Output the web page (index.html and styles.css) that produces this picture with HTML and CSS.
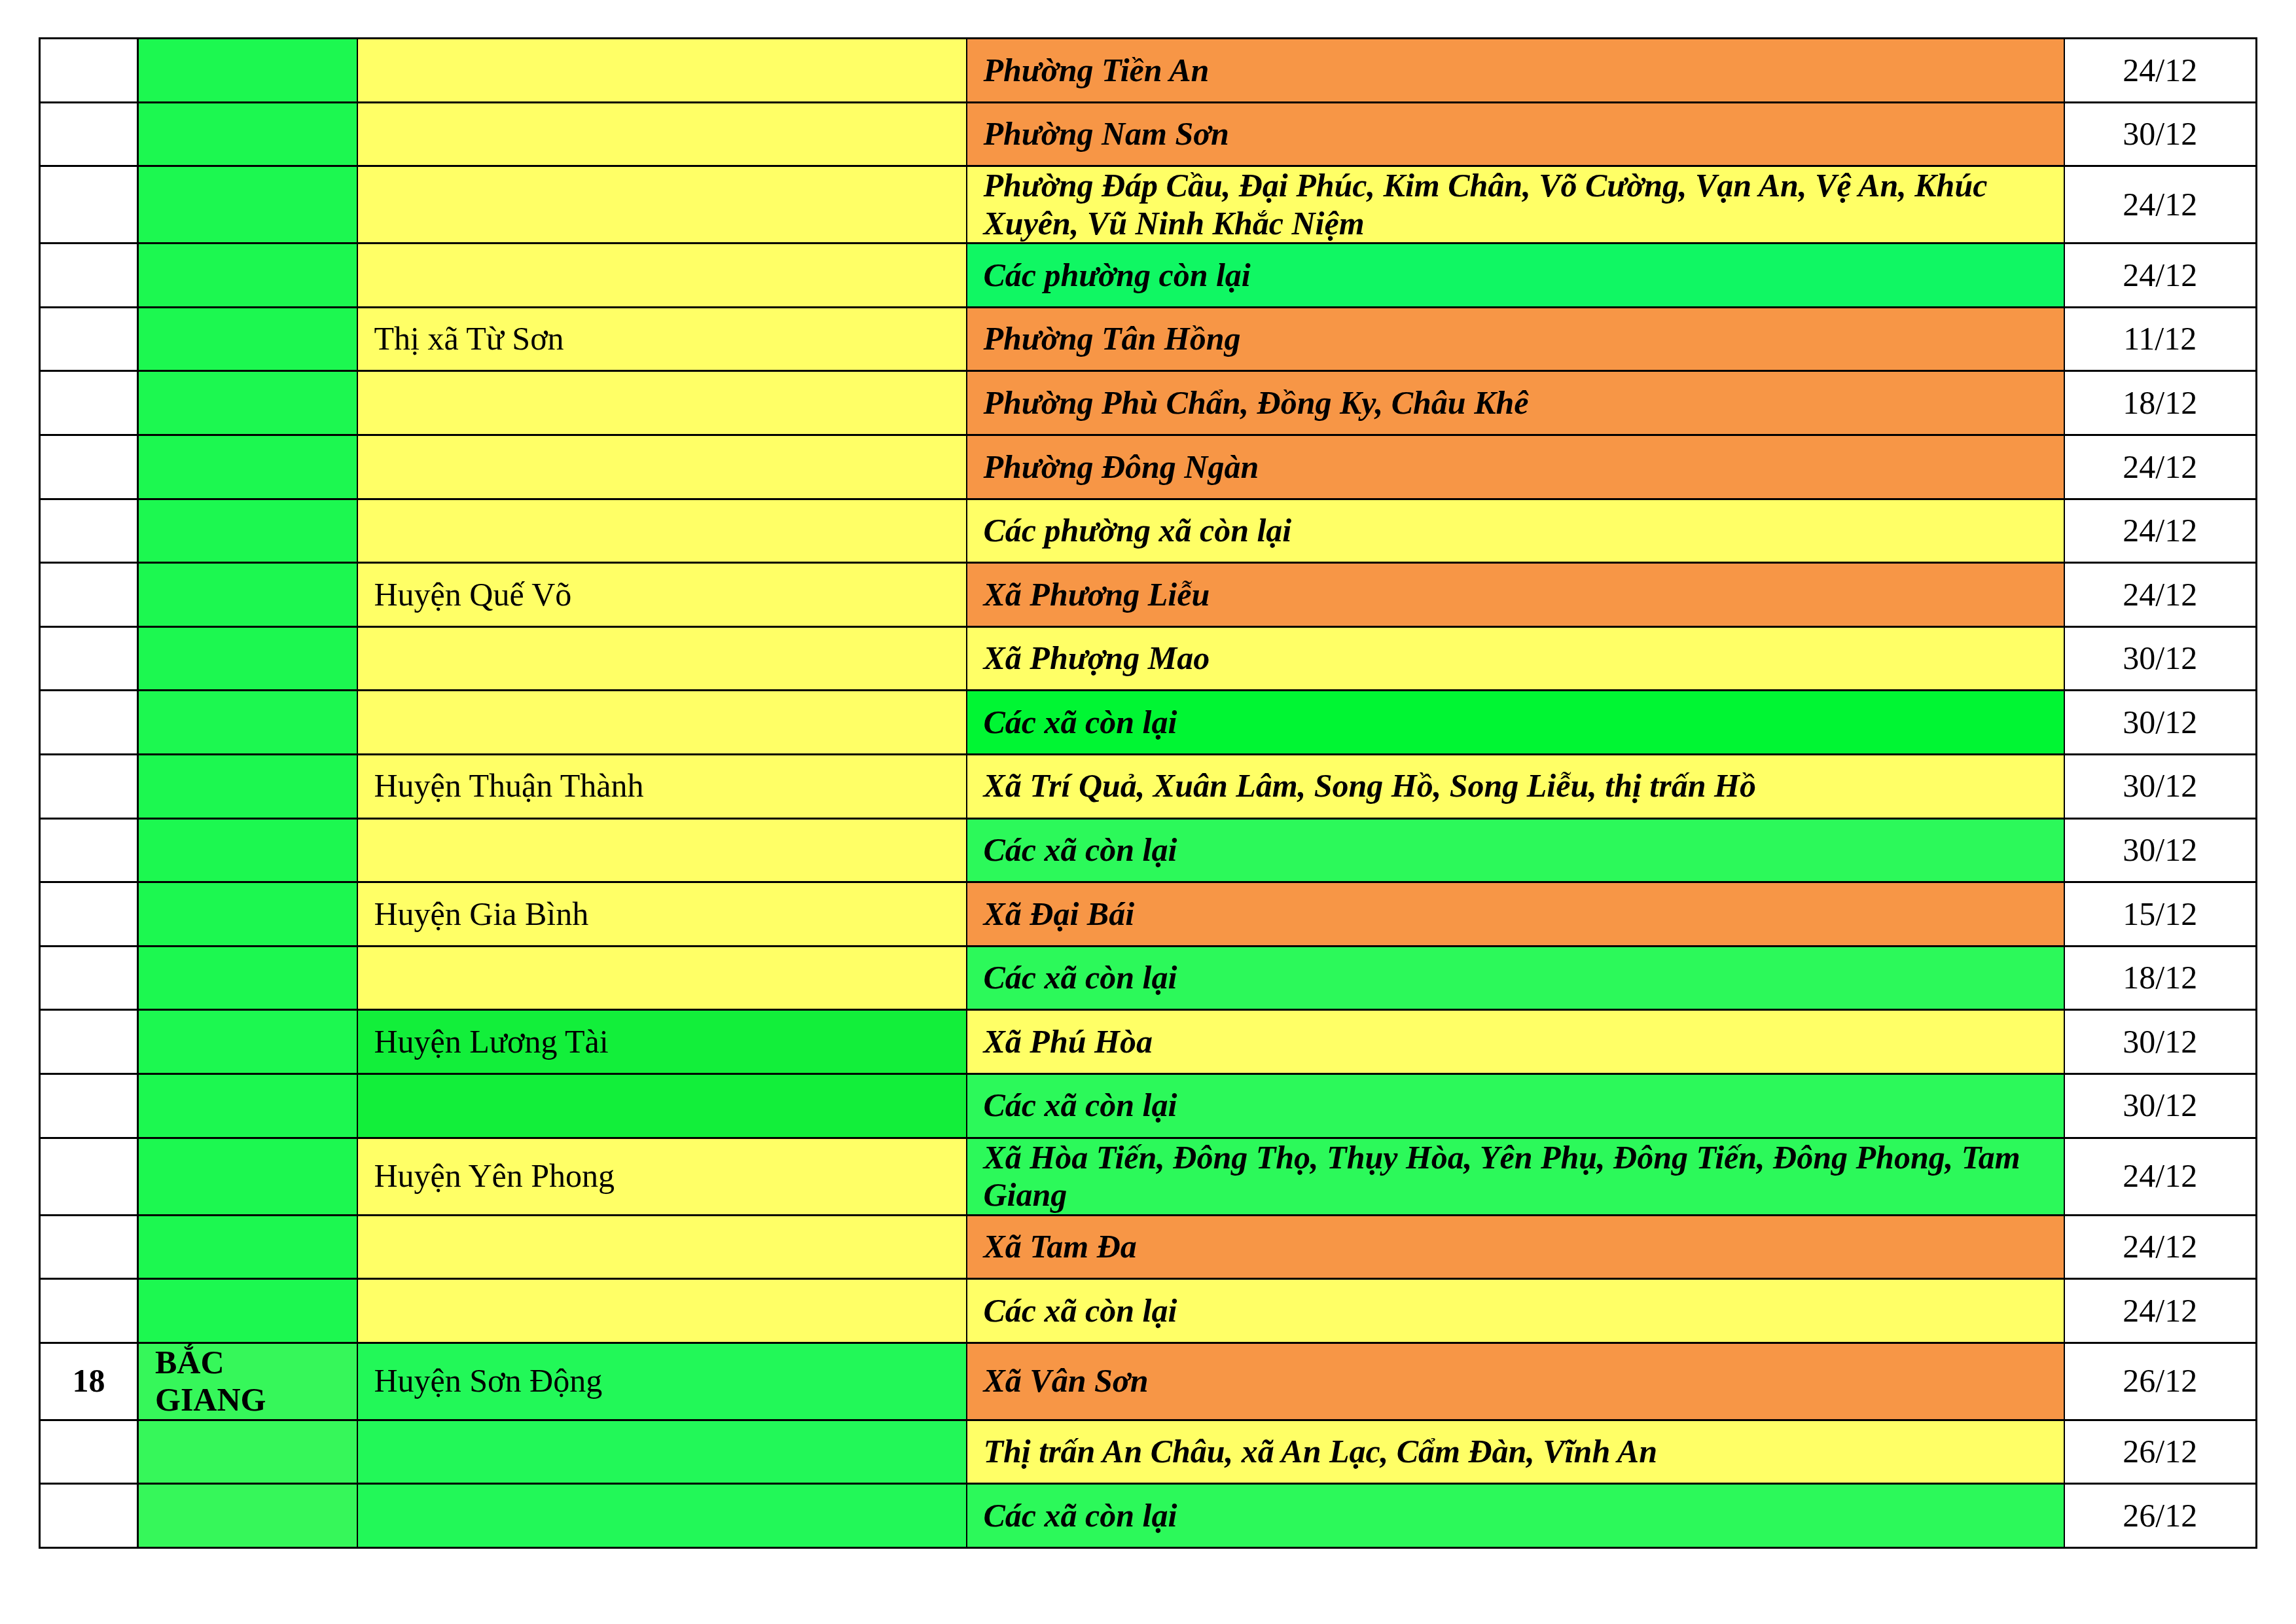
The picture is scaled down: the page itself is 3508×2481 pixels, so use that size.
FILE: index.html
```html
<!DOCTYPE html>
<html lang="vi">
<head>
<meta charset="utf-8">
<title>Bảng</title>
<link rel="stylesheet" href="styles.css">
</head>
<body>
<table class="sheet">
  <colgroup>
    <col class="c-stt"><col class="c-tinh"><col class="c-huyen"><col class="c-xa"><col class="c-ngay">
  </colgroup>
  <tbody>
    <tr><td class="stt"></td><td class="tinh g1"></td><td class="huyen y"></td><td class="xa o">Phường Tiền An</td><td class="ngay">24/12</td></tr>
    <tr><td class="stt"></td><td class="tinh g1"></td><td class="huyen y"></td><td class="xa o">Phường Nam Sơn</td><td class="ngay">30/12</td></tr>
    <tr><td class="stt"></td><td class="tinh g1"></td><td class="huyen y"></td><td class="xa y">Phường Đáp Cầu, Đại Phúc, Kim Chân, Võ Cường, Vạn An, Vệ An, Khúc Xuyên, Vũ Ninh Khắc Niệm</td><td class="ngay">24/12</td></tr>
    <tr><td class="stt"></td><td class="tinh g1"></td><td class="huyen y"></td><td class="xa ga">Các phường còn lại</td><td class="ngay">24/12</td></tr>
    <tr><td class="stt"></td><td class="tinh g1"></td><td class="huyen y">Thị xã Từ Sơn</td><td class="xa o">Phường Tân Hồng</td><td class="ngay">11/12</td></tr>
    <tr><td class="stt"></td><td class="tinh g1"></td><td class="huyen y"></td><td class="xa o">Phường Phù Chẩn, Đồng Ky, Châu Khê</td><td class="ngay">18/12</td></tr>
    <tr><td class="stt"></td><td class="tinh g1"></td><td class="huyen y"></td><td class="xa o">Phường Đông Ngàn</td><td class="ngay">24/12</td></tr>
    <tr><td class="stt"></td><td class="tinh g1"></td><td class="huyen y"></td><td class="xa y">Các phường xã còn lại</td><td class="ngay">24/12</td></tr>
    <tr><td class="stt"></td><td class="tinh g1"></td><td class="huyen y">Huyện Quế Võ</td><td class="xa o">Xã Phương Liễu</td><td class="ngay">24/12</td></tr>
    <tr><td class="stt"></td><td class="tinh g1"></td><td class="huyen y"></td><td class="xa y">Xã Phượng Mao</td><td class="ngay">30/12</td></tr>
    <tr><td class="stt"></td><td class="tinh g1"></td><td class="huyen y"></td><td class="xa gb">Các xã còn lại</td><td class="ngay">30/12</td></tr>
    <tr><td class="stt"></td><td class="tinh g1"></td><td class="huyen y">Huyện Thuận Thành</td><td class="xa y">Xã Trí Quả, Xuân Lâm, Song Hồ, Song Liễu, thị trấn Hồ</td><td class="ngay">30/12</td></tr>
    <tr><td class="stt"></td><td class="tinh g1"></td><td class="huyen y"></td><td class="xa gc">Các xã còn lại</td><td class="ngay">30/12</td></tr>
    <tr><td class="stt"></td><td class="tinh g1"></td><td class="huyen y">Huyện Gia Bình</td><td class="xa o">Xã Đại Bái</td><td class="ngay">15/12</td></tr>
    <tr><td class="stt"></td><td class="tinh g1"></td><td class="huyen y"></td><td class="xa gc">Các xã còn lại</td><td class="ngay">18/12</td></tr>
    <tr><td class="stt"></td><td class="tinh g1"></td><td class="huyen gd">Huyện Lương Tài</td><td class="xa y">Xã Phú Hòa</td><td class="ngay">30/12</td></tr>
    <tr><td class="stt"></td><td class="tinh g1"></td><td class="huyen gd"></td><td class="xa gc">Các xã còn lại</td><td class="ngay">30/12</td></tr>
    <tr><td class="stt"></td><td class="tinh g1"></td><td class="huyen y">Huyện Yên Phong</td><td class="xa gc">Xã Hòa Tiến, Đông Thọ, Thụy Hòa, Yên Phụ, Đông Tiến, Đông Phong, Tam Giang</td><td class="ngay">24/12</td></tr>
    <tr><td class="stt"></td><td class="tinh g1"></td><td class="huyen y"></td><td class="xa o">Xã Tam Đa</td><td class="ngay">24/12</td></tr>
    <tr><td class="stt"></td><td class="tinh g1"></td><td class="huyen y"></td><td class="xa y">Các xã còn lại</td><td class="ngay">24/12</td></tr>
    <tr><td class="stt">18</td><td class="tinh ge">BẮC GIANG</td><td class="huyen gf">Huyện Sơn Động</td><td class="xa o">Xã Vân Sơn</td><td class="ngay">26/12</td></tr>
    <tr><td class="stt"></td><td class="tinh ge"></td><td class="huyen gf"></td><td class="xa y">Thị trấn An Châu, xã An Lạc, Cẩm Đàn, Vĩnh An</td><td class="ngay">26/12</td></tr>
    <tr><td class="stt"></td><td class="tinh ge"></td><td class="huyen gf"></td><td class="xa gc">Các xã còn lại</td><td class="ngay">26/12</td></tr>
  </tbody>
</table>
</body>
</html>
```

FILE: styles.css
```css
html, body {
  margin: 0;
  padding: 0;
  background: #ffffff;
}

body {
  width: 3508px;
  height: 2481px;
  overflow: hidden;
  font-family: "Liberation Serif", "Times New Roman", serif;
  font-size: 50px;
  line-height: 57.5px;
  color: #000000;
}

.sheet {
  margin: 57px 0 0 59px;
  border-collapse: collapse;
  table-layout: fixed;
  width: 3387px;
}

.c-stt { width: 150px; }
.c-tinh { width: 335px; }
.c-huyen { width: 931px; }
.c-xa { width: 1677px; }
.c-ngay { width: 294px; }

.sheet td {
  height: 94.6px;
  padding: 0 12px 0 25px;
  vertical-align: middle;
  border-top: 3px solid #000;
  border-bottom: 3px solid #000;
  border-left: 2px solid #000;
  border-right: 2px solid #000;
  background: #ffffff;
}

.sheet td.stt {
  border-left-width: 3px;
  border-right-width: 3px;
  text-align: center;
  font-weight: bold;
  padding: 0;
}

.sheet td.tinh {
  font-weight: bold;
  padding-right: 40px;
}

.sheet td.huyen {
  border-left-width: 1px;
  border-right-width: 1px;
}

.sheet td.xa {
  font-weight: bold;
  font-style: italic;
}

.sheet td.ngay {
  text-align: center;
  padding: 0;
  border-right-width: 3px;
}

.sheet td.g1 { background: #1cf850; }
.sheet td.y { background: #ffff66; }
.sheet td.o { background: #f79646; }
.sheet td.ga { background: #10f763; }
.sheet td.gb { background: #00f633; }
.sheet td.gc { background: #2cf95a; }
.sheet td.gd { background: #12ef3a; }
.sheet td.ge { background: #36f75a; }
.sheet td.gf { background: #22f858; }
```
